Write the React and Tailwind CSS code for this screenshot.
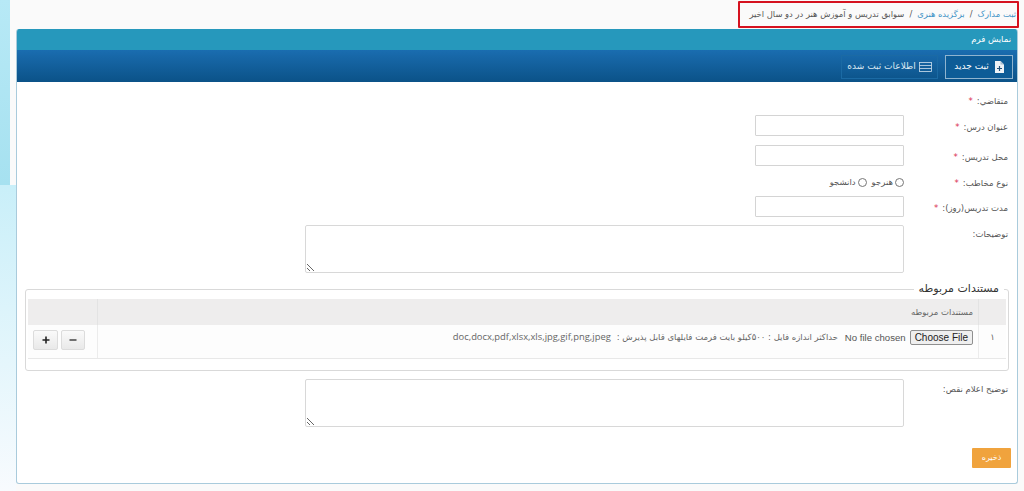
import React from 'react';

const Req = () => <span className="text-[#d9304f] mr-[4px]">*</span>;

const FormRow = ({ label, required, className, children }) => (
  <div className={`flex items-center ${className}`}>
    <div className="w-[104px] pt-[3px] shrink-0 text-[#555] text-[8.5px] whitespace-nowrap">
      {label}
      {required && <Req />}
    </div>
    <div className="flex-1">{children}</div>
  </div>
);

const TextBox = () => (
  <input type="text" className="block w-[149px] h-[21px] bg-white border border-[#d4d4d4] rounded-[1px] outline-none" />
);

const Notes = () => (
  <textarea className="block w-[599px] h-[48px] bg-white border border-[#d8d8d8] rounded-[2px] outline-none" />
);

const App = () => {
  return (
    <div dir="rtl" className="relative w-[1024px] h-[491px] overflow-hidden bg-[#fafafa] font-['DejaVu_Sans','Open_Sans',sans-serif]">
      <div className="absolute left-0 top-0 w-[10px] h-[185px] bg-gradient-to-b from-[#b7e9f6] to-[#a6e1f0]" />
      <div className="absolute left-0 top-[185px] w-[16px] h-[306px] bg-gradient-to-b from-[#c9eff9] to-[#f8fbfe]" />

      <div className="relative mr-[5px] ml-[6px] pt-[1px]">
        <div className="h-[28px] flex justify-start">
          <div className="w-[281px] h-[27px] border-[2px] border-[#d5121f] rounded-[1px] flex items-center pr-[1px] text-[8.4px] text-[#555] whitespace-nowrap">
            <a className="text-[#3f93c6]">ثبت مدارک</a>
            <span className="mx-[5px]">/</span>
            <a className="text-[#3f93c6]">برگزیده هنری</a>
            <span className="mx-[5px]">/</span>
            <span>سوابق تدریس و آموزش هنر در دو سال اخیر</span>
          </div>
        </div>
      </div>

      <div className="relative mr-[6px] ml-[16px] h-[455px] bg-white border border-t-0 border-[#a9cbdc] rounded-[3px] overflow-hidden">
        <div className="h-[21px] bg-[#2698bc] flex items-center pr-[6px] text-[8.5px] text-white">نمایش فرم</div>
        <div className="h-[32px] bg-gradient-to-b from-[#1a6db0] to-[#0b5288] flex items-center pr-[4px] pt-[1px] text-[9px] text-white">
          <div className="w-[68px] h-[24px] border border-[#8fb4cf] bg-[#0d5c97] flex items-center justify-center gap-[5px]">
            <svg width="10" height="12" viewBox="0 0 10 12">
              <path d="M1 0h5.5L10 3.5V12H1z" fill="#eef3f7" />
              <path d="M6.5 0v3.5H10z" fill="#a9bfd0" />
              <path d="M5.5 5v5M3 7.5h5" stroke="#24527a" strokeWidth="1.2" />
            </svg>
            <span>ثبت جدید</span>
          </div>
          <div className="w-[97px] h-[24px] mr-[7px] border border-[#1b6aa4] flex items-center justify-center gap-[3px] text-[#dbe8f2]">
            <svg width="13" height="10" viewBox="0 0 13 10" fill="none" stroke="#cfe0ee" strokeWidth="0.8">
              <rect x="0.5" y="0.5" width="12" height="9" />
              <path d="M0.5 3.5h12M0.5 6.5h12" />
            </svg>
            <span>اطلاعات ثبت شده</span>
          </div>
        </div>

        <div className="pr-[9px] pt-[7px]">
          <FormRow label="متقاضي:" required className="h-[22px] mb-[4px]" />
          <FormRow label="عنوان درس:" required className="h-[21px]"><TextBox /></FormRow>
          <FormRow label="محل تدریس:" required className="h-[21px] mt-[9px]"><TextBox /></FormRow>
          <FormRow label="نوع مخاطب:" required className="h-[22px] mt-[5px]">
            <div className="flex items-center gap-[5px] text-[8.5px] text-[#555]">
              <label className="flex items-center gap-[2px]"><input type="radio" name="audience" className="w-[9px] h-[9px] m-0" />هنرجو</label>
              <label className="flex items-center gap-[2px]"><input type="radio" name="audience" className="w-[9px] h-[9px] m-0" />دانشجو</label>
            </div>
          </FormRow>
          <FormRow label="مدت تدریس(روز):" required className="h-[21px] mt-[3px]"><TextBox /></FormRow>
          <div className="flex h-[48px] mt-[8px]">
            <div className="w-[104px] shrink-0 text-[#555] text-[8.5px] pt-[3px]">توضیحات:</div>
            <Notes />
          </div>
        </div>

        <fieldset className="mt-[7px] mr-[8px] ml-[8px] h-[91px] border border-[#d9d9d9] rounded-[3px] px-[2px]">
          <legend className="mr-[2px] px-[5px] text-[11px] text-[#333] leading-[18px] mb-[1px]">مستندات مربوطه</legend>
          <div className="text-[#666] text-[8.5px]">
            <div className="flex h-[26px] bg-[#eeeded]">
              <div className="w-[28px] border-l border-[#e3e3e3]" />
              <div className="flex-1 flex items-center pr-[5px]">مستندات مربوطه</div>
              <div className="w-[70px] border-r border-[#e3e3e3]" />
            </div>
            <div className="flex h-[34px] bg-[#fdfdfd] border-b border-[#e8e8e8]">
              <div className="w-[28px] flex items-start justify-center pt-[6px] border-l border-[#ececec]">١</div>
              <div className="flex-1 flex items-start pr-[5px] pt-[5px] whitespace-nowrap">
                <input type="file" className="w-[134px] shrink-0 text-[9.6px] leading-[14px] text-[#555] font-['Liberation_Sans',sans-serif] file:h-[15px] file:px-[4px] file:ml-[4px] file:text-[10px] file:text-[#222] file:bg-[#efefef] file:border file:border-[#8f8f8f] file:rounded-[2px]" />
                <span className="mr-[1px] pt-[1px]">حداکثر اندازه فایل : ۵۰۰کیلو بایت فرمت فایلهای قابل پذیرش : </span>
                <span dir="ltr" className="mr-[6px] font-['Open_Sans',sans-serif] text-[9.4px] text-[#666]">doc,docx,pdf,xlsx,xls,jpg,gif,png,jpeg</span>
              </div>
              <div className="w-[70px] border-r border-[#ececec] flex items-start justify-end gap-[3px] pt-[5px] pl-[5px]">
                <button className="w-[24px] h-[20px] flex items-center justify-center bg-gradient-to-b from-[#fafafa] to-[#e9e9e9] border border-[#dcdcdc] rounded-[2px] text-[#333]">
                  <svg width="8" height="8" viewBox="0 0 8 8"><path d="M0.5 4h7" stroke="#444" strokeWidth="1.6" /></svg>
                </button>
                <button className="w-[25px] h-[20px] flex items-center justify-center bg-gradient-to-b from-[#fafafa] to-[#e9e9e9] border border-[#dcdcdc] rounded-[2px] text-[#333]">
                  <svg width="8" height="8" viewBox="0 0 8 8"><path d="M0.5 4h7M4 0.5v7" stroke="#222" strokeWidth="1.6" /></svg>
                </button>
              </div>
            </div>
          </div>
        </fieldset>

        <div className="flex pr-[9px] mt-[8px] h-[48px]">
          <div className="w-[104px] shrink-0 text-[#555] text-[8.5px] pt-[4px]">توضیح اعلام نقص:</div>
          <Notes />
        </div>

        <div className="mr-[6px] mt-[21px]">
          <button className="block w-[39px] h-[20px] bg-[#f0a33d] text-white text-[8px] rounded-[1px]">ذخیره</button>
        </div>
      </div>
    </div>
  );
};

export default App;
